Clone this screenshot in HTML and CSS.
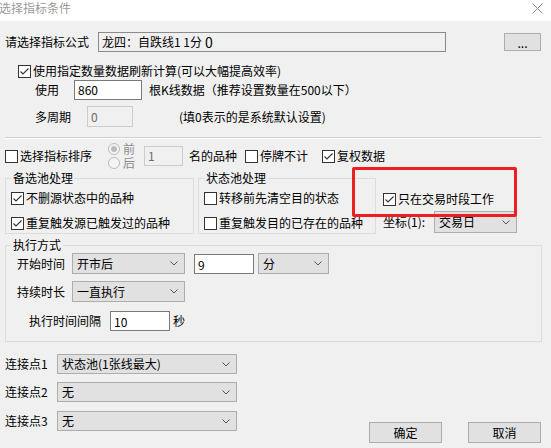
FILE: index.html
```html
<!DOCTYPE html>
<html lang="zh-CN">
<head>
<meta charset="utf-8">
<title>选择指标条件</title>
<link rel="stylesheet" href="styles.css">
</head>
<body>
<div class="win">
  <div class="titlebar">
    <span class="title">选择指标条件</span>
    <span class="close"><svg width="11" height="11" viewBox="0 0 11 11"><path d="M0.5 0.5L10.5 10.5M10.5 0.5L0.5 10.5" stroke="#8a8a8a" stroke-width="1"/></svg></span>
  </div>
  <div class="content">
    <div class="row r1">
      <span class="lbl w93">请选择指标公式</span>
      <div class="edit formula">龙四：自跌线1 1分 <span class="big0">0</span></div>
      <button class="btn dots">...</button>
    </div>

    <div class="row r2">
      <span class="cb on"><svg width="11" height="11" viewBox="0 0 11 11"><path d="M1.5 5.5L4 8L9.5 2.5" fill="none" stroke="#333" stroke-width="1.1"/></svg></span>
      <span>使用指定数量数据刷新计算(可以大幅提高效率)</span>
    </div>

    <div class="row r3">
      <span class="lbl w39">使用</span>
      <div class="edit w68">860</div>
      <span class="ml7">根K线数据（推荐设置数量在500以下）</span>
    </div>

    <div class="row r4">
      <span class="lbl w52">多周期</span>
      <div class="edit dis w46">0</div>
      <span class="ml46">(填0表示的是系统默认设置)</span>
    </div>

    <div class="sep"></div>

    <div class="row r5">
      <div class="item w103">
        <span class="cb"></span><span>选择指标排序</span>
      </div>
      <div class="radios">
        <div class="ritem"><span class="radio on"></span><span class="grey">前</span></div>
        <div class="ritem"><span class="radio"></span><span class="grey">后</span></div>
      </div>
      <div class="edit dis w39 h22">1</div>
      <span class="ml6 w56">名的品种</span>
      <div class="item w77">
        <span class="cb"></span><span>停牌不计</span>
      </div>
      <div class="item">
        <span class="cb on"><svg width="11" height="11" viewBox="0 0 11 11"><path d="M1.5 5.5L4 8L9.5 2.5" fill="none" stroke="#333" stroke-width="1.1"/></svg></span><span>复权数据</span>
      </div>
    </div>

    <div class="row groups">
      <fieldset class="g1">
        <legend>备选池处理</legend>
        <div class="gitem first">
          <span class="cb on"><svg width="11" height="11" viewBox="0 0 11 11"><path d="M1.5 5.5L4 8L9.5 2.5" fill="none" stroke="#333" stroke-width="1.1"/></svg></span><span>不删源状态中的品种</span>
        </div>
        <div class="gitem second">
          <span class="cb on"><svg width="11" height="11" viewBox="0 0 11 11"><path d="M1.5 5.5L4 8L9.5 2.5" fill="none" stroke="#333" stroke-width="1.1"/></svg></span><span>重复触发源已触发过的品种</span>
        </div>
      </fieldset>
      <fieldset class="g2">
        <legend>状态池处理</legend>
        <div class="gitem first">
          <span class="cb"></span><span>转移前先清空目的状态</span>
        </div>
        <div class="gitem second">
          <span class="cb"></span><span>重复触发目的已存在的品种</span>
        </div>
      </fieldset>
      <div class="rcol">
        <div class="row ra">
          <span class="cb on"><svg width="11" height="11" viewBox="0 0 11 11"><path d="M1.5 5.5L4 8L9.5 2.5" fill="none" stroke="#333" stroke-width="1.1"/></svg></span><span>只在交易时段工作</span>
        </div>
        <div class="row rb">
          <span class="lbl w51">坐标(1):</span>
          <div class="combo w83 h22"><span>交易日</span><svg class="chev" width="8" height="5" viewBox="0 0 8 5"><path d="M0.5 0.5L4 4L7.5 0.5" fill="none" stroke="#555" stroke-width="1"/></svg></div>
        </div>
      </div>
    </div>

    <fieldset class="exec">
      <legend>执行方式</legend>
      <div class="row e1">
        <span class="lbl w55">开始时间</span>
        <div class="combo w113 h21"><span>开市后</span><svg class="chev" width="8" height="5" viewBox="0 0 8 5"><path d="M0.5 0.5L4 4L7.5 0.5" fill="none" stroke="#555" stroke-width="1"/></svg></div>
        <div class="edit top w60 h23 ml9">9</div>
        <div class="combo w71 h21 ml4"><span>分</span><svg class="chev" width="8" height="5" viewBox="0 0 8 5"><path d="M0.5 0.5L4 4L7.5 0.5" fill="none" stroke="#555" stroke-width="1"/></svg></div>
      </div>
      <div class="row e2">
        <span class="lbl w55">持续时长</span>
        <div class="combo w113 h21"><span>一直执行</span><svg class="chev" width="8" height="5" viewBox="0 0 8 5"><path d="M0.5 0.5L4 4L7.5 0.5" fill="none" stroke="#555" stroke-width="1"/></svg></div>
      </div>
      <div class="row e3">
        <span class="lbl w81">执行时间间隔</span>
        <div class="edit top w60 h22">10</div>
        <span class="ml3">秒</span>
      </div>
    </fieldset>

    <div class="bottom">
      <div class="links">
        <div class="row l1">
          <span class="lbl w52">连接点1</span>
          <div class="combo w180 h20"><span>状态池(1张线最大)</span><svg class="chev" width="8" height="5" viewBox="0 0 8 5"><path d="M0.5 0.5L4 4L7.5 0.5" fill="none" stroke="#555" stroke-width="1"/></svg></div>
        </div>
        <div class="row l2">
          <span class="lbl w52">连接点2</span>
          <div class="combo w180 h20"><span>无</span><svg class="chev" width="8" height="5" viewBox="0 0 8 5"><path d="M0.5 0.5L4 4L7.5 0.5" fill="none" stroke="#555" stroke-width="1"/></svg></div>
        </div>
        <div class="row l3">
          <span class="lbl w52">连接点3</span>
          <div class="combo w180 h20"><span>无</span><svg class="chev" width="8" height="5" viewBox="0 0 8 5"><path d="M0.5 0.5L4 4L7.5 0.5" fill="none" stroke="#555" stroke-width="1"/></svg></div>
        </div>
      </div>
      <div class="buttons">
        <button class="btn ok">确定</button>
        <button class="btn ok">取消</button>
      </div>
    </div>
  </div>
  <div class="mark"></div>
</div>
</body>
</html>
```

FILE: styles.css
```css
* { box-sizing: border-box; }
html, body { margin: 0; padding: 0; }
body {
  background: #f0f0f0;
  font-family: "Noto Sans CJK SC", "Liberation Sans", sans-serif;
  font-size: 12px;
  line-height: 16px;
  color: #000;
}
.win { position: relative; width: 551px; height: 448px; overflow: hidden; }

.titlebar {
  height: 21px;
  background: #fff;
  display: flex;
  justify-content: space-between;
  align-items: flex-start;
}
.title { color: #9a9a9a; margin-left: -1px; font-size: 12px; line-height: 16px; }
.close { display: flex; margin: 3px 8px 0 0; }

.content { padding: 0 10px 0 5px; }
.row { display: flex; align-items: center; }

.lbl { flex: none; white-space: nowrap; }
.w39 { width: 39px; } .w46 { width: 46px; } .w51 { width: 51px; } .w52 { width: 52px; }
.w55 { width: 55px; } .w56 { width: 56px; } .w60 { width: 60px; } .w68 { width: 68px; }
.w71 { width: 71px; } .w77 { width: 77px; } .w81 { width: 81px; } .w83 { width: 83px; }
.w93 { width: 93px; } .w103 { width: 103px; } .w113 { width: 113px; } .w180 { width: 180px; }
.h20 { height: 20px; } .h21 { height: 21px; } .h22 { height: 22px; } .h23 { height: 23px; }
.ml3 { margin-left: 3px; } .ml4 { margin-left: 4px; } .ml6 { margin-left: 6px; }
.ml7 { margin-left: 7px; } .ml9 { margin-left: 9px; } .ml46 { margin-left: 46px; }

.edit {
  flex: none;
  height: 20px;
  border: 1px solid #7a7a7a;
  background: #fff;
  padding: 0 3px;
  display: flex;
  align-items: center;
  white-space: nowrap;
}
.edit.top { align-items: flex-start; padding-top: 2px; }
.edit.dis { border-color: #cccccc; background: #f0f0f0; color: #6d6d6d; }
.formula { width: 348px; background: #f0f0f0; border-color: #8a8a8a; }
.big0 { font-size: 14px; margin-left: 3px; }

.btn {
  flex: none;
  font: inherit;
  color: #000;
  background: #e1e1e1;
  border: 1px solid #adadad;
  padding: 0;
  display: flex;
  align-items: center;
  justify-content: center;
}
.dots { width: 37px; height: 18px; margin-left: auto; line-height: 14px; padding-top: 2px; }

.cb {
  flex: none;
  width: 13px;
  height: 13px;
  border: 1px solid #333;
  background: #fff;
  margin-right: 2px;
  display: flex;
}

.r1 { margin-top: 11px; height: 20px; }
.r2 { margin-top: 12px; height: 14px; padding-left: 13px; }
.r3 { margin-top: 2px; height: 20px; padding-left: 30px; }
.r4 { margin-top: 6px; height: 21px; padding-left: 30px; }
.r4 .edit { height: 21px; }

.sep { margin-top: 10px; height: 2px; border-top: 1px solid #d0d0d0; border-bottom: 1px solid #fff; }

.r5 { margin-top: 3px; height: 28px; }
.item { display: flex; align-items: center; flex: none; white-space: nowrap; }
.radios { width: 36px; flex: none; display: flex; flex-direction: column; }
.ritem { height: 14px; line-height: 14px; display: flex; align-items: center; }
.radio {
  flex: none;
  width: 12px;
  height: 12px;
  border-radius: 50%;
  border: 1px solid #bcbcbc;
  background: #f4f4f4;
  margin-right: 3px;
  display: flex;
  align-items: center;
  justify-content: center;
}
.radio.on::after { content: ""; width: 6px; height: 6px; border-radius: 50%; background: #bcbcbc; }
.grey { color: #8d8d8d; }

.groups { margin-top: 1px; align-items: flex-start; }
fieldset {
  margin: 0;
  padding: 0 0 0 5px;
  border: 1px solid #dcdcdc;
  min-width: 0;
  flex: none;
}
legend { padding: 0 2px; margin: 0; line-height: 14px; height: 14px; }
.g1 { width: 189px; height: 63px; }
.g2 { width: 178px; height: 63px; margin-left: 4px; }
.gitem { display: flex; align-items: center; height: 20px; white-space: nowrap; }
.gitem.first { margin-top: 3px; }
.gitem.second { margin-top: 5px; }

.rcol { margin-left: 7px; }
.ra { margin-top: 21px; height: 14px; }
.rb { margin-top: 5px; height: 22px; }

.combo {
  flex: none;
  background: #e1e1e1;
  border: 1px solid #adadad;
  display: flex;
  align-items: center;
  padding: 0 6px 0 4px;
  white-space: nowrap;
}
.combo .chev { margin-left: auto; flex: none; }

.exec { margin-top: 4px; width: 537px; height: 104px; }
.e1 { height: 23px; padding-left: 6px; }
.e2 { margin-top: 6px; height: 21px; padding-left: 6px; }
.e3 { margin-top: 8px; height: 22px; padding-left: 18px; }

.bottom { margin-top: 12px; height: 89px; display: flex; align-items: flex-start; }
.links { flex: none; }
.l1 { height: 20px; }
.l2 { margin-top: 8px; height: 20px; }
.l3 { margin-top: 9px; height: 20px; }
.buttons { margin-left: auto; align-self: flex-end; display: flex; gap: 26px; }
.ok { width: 73px; height: 21px; }

.mark {
  position: absolute;
  left: 352px;
  top: 167px;
  width: 165px;
  height: 50px;
  border: 3px solid #f01e1e;
  border-radius: 2px;
}
```
